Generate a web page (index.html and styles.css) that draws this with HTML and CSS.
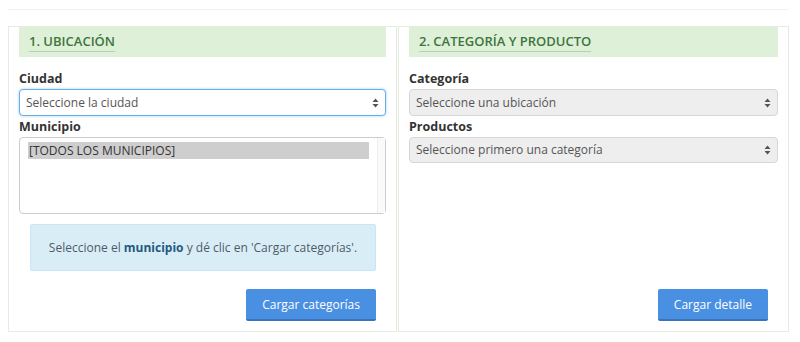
FILE: index.html
```html
<!DOCTYPE html>
<html lang="es">
<head>
  <meta charset="UTF-8">
  <title>Consulta de precios</title>
  <link rel="stylesheet" href="styles.css">
</head>
<body>

<div class="top-rule"></div>

<div class="steps">
  <div class="panel">
    <div class="panel-title"><span>1. UBICACIÓN</span></div>

    <label class="field-label">Ciudad</label>
    <div class="select focused">Seleccione la ciudad</div>

    <label class="field-label">Municipio</label>
    <div class="listbox">
      <div class="options">
        <div class="option selected">[TODOS LOS MUNICIPIOS]</div>
      </div>
      <div class="scroll-track"></div>
    </div>

    <div class="alert-info">
      Seleccione el <b>municipio</b> y dé clic en 'Cargar categorías'.
    </div>

    <div class="actions">
      <button class="btn-primary">Cargar categorías</button>
    </div>
  </div>

  <div class="panel">
    <div class="panel-title"><span>2. CATEGORÍA Y PRODUCTO</span></div>

    <label class="field-label">Categoría</label>
    <div class="select disabled">Seleccione una ubicación</div>

    <label class="field-label">Productos</label>
    <div class="select disabled short">Seleccione primero una categoría</div>

    <div class="actions">
      <button class="btn-primary">Cargar detalle</button>
    </div>
  </div>
</div>

</body>
</html>
```

FILE: styles.css
```css
* {
  box-sizing: border-box;
}

body {
  margin: 0;
  padding: 9px 12px 0 8px;
  background-color: #fff;
  font-family: "Open Sans", Arial, sans-serif;
  font-size: 12px;
  color: #333;
}

.top-rule {
  height: 1px;
  background-color: #f2f2f2;
  margin-bottom: 16px;
}

.steps {
  display: grid;
  grid-template-columns: 389px 391px;
  gap: 1px;
}

.panel {
  display: flex;
  flex-direction: column;
  border: 1px solid #e6ebe0;
  padding: 0 10px 10px;
  box-shadow: 0 1px 1px rgba(0,0,0,0.03);
}

.panel-title {
  background-color: #dff0d8;
  height: 30px;
  padding: 5px 10px 0;
  margin-bottom: 13px;
}

.panel-title span {
  display: inline-block;
  font-size: 13px;
  font-weight: 600;
  line-height: 18px;
  color: #3c763d;
  padding-bottom: 1px;
  border-bottom: 1px solid #b9cfb0;
}

.field-label {
  display: block;
  font-weight: 700;
  font-size: 12.5px;
  line-height: 18px;
  margin-bottom: 1px;
  color: #333;
}

.select {
  height: 27px;
  line-height: 25px;
  padding: 0 6px;
  border: 1px solid #ccc;
  border-radius: 4px;
  color: #555;
  margin-bottom: 2px;
  background-image: url("data:image/svg+xml;utf8,<svg xmlns='http://www.w3.org/2000/svg' width='7' height='10'><path d='M3.5 0.5 L6.5 4 L0.5 4 Z M0.5 6 L6.5 6 L3.5 9.5 Z' fill='%23555'/></svg>");
  background-repeat: no-repeat;
  background-position: right 6px center;
}

.select.focused {
  border-color: #66afe9;
  box-shadow: 0 0 3px rgba(102,175,233,0.6);
  background-color: #fff;
}

.select.disabled {
  background-color: #eee;
  border-color: #d6d6d6;
}

.select.short {
  height: 26px;
  line-height: 24px;
}

.listbox {
  display: flex;
  height: 77px;
  border: 1px solid #ccc;
  border-radius: 4px;
  background-color: #fff;
}

.options {
  flex: 1;
  padding: 4px 8px 0;
}

.option {
  line-height: 17px;
  padding-left: 1px;
  color: #333;
}

.option.selected {
  background-color: #cecece;
}

.scroll-track {
  width: 8px;
  border-left: 1px solid #eee;
  background-color: #fafafa;
}

.alert-info {
  margin: 10px 10px 0 11px;
  height: 47px;
  background-color: #d9edf7;
  border: 1px solid #c9e6f2;
  border-radius: 2px;
  color: #4d5c68;
  text-align: center;
  line-height: 45px;
}

.alert-info b {
  color: #245a7e;
}

.actions {
  margin-top: auto;
  padding-top: 18px;
  padding-right: 10px;
  display: flex;
  justify-content: flex-end;
}

.btn-primary {
  height: 32px;
  padding: 0 16px;
  border: none;
  border-bottom: 2px solid #3a74bd;
  border-radius: 2px;
  background-color: #4a90e2;
  color: #fff;
  font-family: "Open Sans", Arial, sans-serif;
  font-size: 12px;
  cursor: pointer;
}
```
